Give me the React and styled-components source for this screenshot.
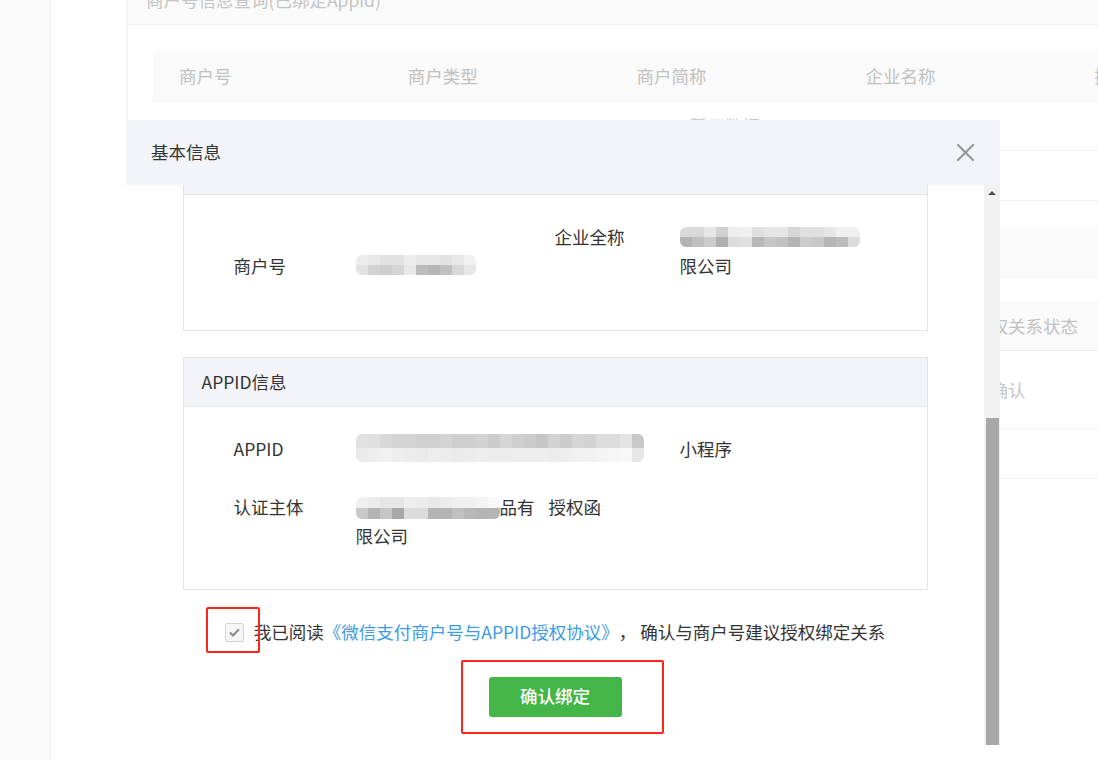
import React, { useLayoutEffect, useRef } from 'react';
import styled, { createGlobalStyle } from 'styled-components';

const GlobalStyle = createGlobalStyle`
  *, *::before, *::after { box-sizing: border-box; }
  html, body { margin: 0; padding: 0; }
  body {
    width: 1098px;
    height: 760px;
    overflow: hidden;
    background: #fff;
    font-family: "Noto Sans CJK SC", "Microsoft YaHei", "Liberation Sans", sans-serif;
    font-size: 17.5px;
    color: #333;
  }
`;

// ---------- background page ----------

const Page = styled.div`
  position: relative;
  display: flex;
  width: 1098px;
  height: 760px;
  overflow: hidden;
`;

const Sidebar = styled.aside`
  width: 51px;
  flex-shrink: 0;
  background: #fafafa;
  border-right: 1px solid #f0f0f0;
`;

const Main = styled.main`
  display: flex;
  flex-direction: column;
  gap: 26px;
  margin-top: -25px;
  padding-left: 76px;
`;

const Card = styled.section`
  width: 1195px;
  flex-shrink: 0;
  background: #fff;
  border-left: 1px solid #f0f0f0;
  border-bottom: 1px solid #f0f0f0;
`;

const CardHeader = styled.div`
  height: 50px;
  display: flex;
  align-items: center;
  padding-left: 18px;
  background: #fafafa;
  border-bottom: 1px solid #f0f0f0;
  color: #c4c4c4;
`;

const CardBody = styled.div`
  padding: ${p => p.$pad};
`;

const Table = styled.div`
  display: grid;
  grid-template-columns: ${p => p.$cols};
`;

const HeadCell = styled.div`
  height: 50px;
  display: flex;
  align-items: center;
  padding-left: 26px;
  background: #fafafa;
  border-bottom: 1px solid #f0f0f0;
  color: #c0c0c0;
  white-space: nowrap;
`;

const BodyCell = styled.div`
  height: ${p => p.$h}px;
  display: flex;
  align-items: center;
  padding-left: 26px;
  border-bottom: 1px solid #f0f0f0;
  color: #c4c4c4;
  white-space: nowrap;
`;

const EmptyRow = styled.div`
  grid-column: 1 / -1;
  height: 50px;
  display: flex;
  align-items: center;
  justify-content: center;
  border-bottom: 1px solid #f0f0f0;
  color: #c8c8c8;
`;

// ---------- modal ----------

const Modal = styled.div`
  position: absolute;
  left: 126px;
  top: 120px;
  width: 874px;
  height: 625px;
  display: flex;
  flex-direction: column;
  background: #fff;
`;

const ModalHeader = styled.header`
  height: 65px;
  flex-shrink: 0;
  display: flex;
  align-items: center;
  justify-content: space-between;
  padding: 0 25px;
  background: #f3f4f8;
`;

const ModalTitle = styled.h2`
  margin: -2px 0 0;
  font-size: 17.5px;
  font-weight: normal;
  color: #333;
`;

const CloseBtn = styled.button`
  width: 19px;
  height: 19px;
  padding: 0;
  border: 0;
  background: none;
  display: flex;
`;

const ModalBody = styled.div`
  flex: 1;
  min-height: 0;
  display: flex;
`;

const Viewport = styled.div`
  flex: 1;
  overflow: hidden;
`;

const Content = styled.div`
  display: flex;
  flex-direction: column;
  align-items: center;
  padding: 26px 0 28px;
`;

const ScrollBar = styled.div`
  width: 16px;
  flex-shrink: 0;
  display: flex;
  flex-direction: column;
  background: #f1f1f1;
`;

const ScrollArrow = styled.div`
  height: 16px;
  display: flex;
  align-items: center;
  justify-content: center;
  &::before {
    content: '';
    border-left: 4px solid transparent;
    border-right: 4px solid transparent;
    border-bottom: 4px solid #505050;
  }
`;

const ScrollTrack = styled.div`
  flex: 1;
`;

const ScrollThumb = styled.div`
  height: 327px;
  margin: 0 1px 0 2px;
  background: #a8a8a8;
`;

const Section = styled.section`
  width: 745px;
  margin-bottom: 26px;
  border: 1px solid #e4e4e4;
`;

const SectionHeader = styled.div`
  height: 49px;
  display: flex;
  align-items: center;
  padding: 0 0 2px 18px;
  background: #f3f4f8;
  border-bottom: 1px solid #e4e4e4;
  color: #333;
`;

const SectionBody = styled.div`
  display: grid;
  grid-template-columns: ${p => p.$cols};
  align-content: start;
  row-gap: 29px;
  height: ${p => p.$h}px;
  padding: 27px 0 0 50px;
  line-height: 29px;
`;

const Cell = styled.div`
  align-self: ${p => p.$align || 'start'};
  grid-column: ${p => p.$span || 'auto'};
  display: ${p => (p.$flex ? 'flex' : 'block')};
  align-items: center;
  min-height: 29px;
`;

const Note = styled.p`
  margin: 0;
  height: ${p => p.$h}px;
  padding: 20px 30px;
  line-height: 29px;
  color: #666;
`;

const MosaicGrid = styled.span`
  display: ${p => (p.$block ? 'grid' : 'inline-grid')};
  grid-template-columns: repeat(${p => p.$cols}, ${p => p.$cell}px);
  grid-auto-rows: ${p => p.$rowH}px;
  vertical-align: middle;
  margin: ${p => (p.$block ? '0' : '-8px 0 -6px')};
  filter: blur(0.5px);
  border-radius: 6px;
  overflow: hidden;
`;

const Tile = styled.span`
  background: ${p => p.$shade};
`;

const Agree = styled.div`
  display: flex;
  align-items: center;
  height: 29px;
  margin-top: 2px;
  padding-bottom: 2px;
  color: #333;
  white-space: nowrap;
`;

const CheckWrap = styled.span`
  position: relative;
  display: inline-flex;
  margin: 2px 10px 0 0;
`;

const CheckBox = styled.span`
  width: 19px;
  height: 19px;
  display: inline-flex;
  align-items: center;
  justify-content: center;
  border: 1px solid #d2d2d2;
  border-radius: 2px;
  background: #f6f6f6;
`;

const Annotation = styled.span`
  position: absolute;
  inset: ${p => p.$inset};
  border: 2.5px solid #ff2419;
  border-radius: 2px;
  pointer-events: none;
`;

const AgreementLink = styled.a`
  color: #3d9ae6;
  text-decoration: none;
`;

const ButtonWrap = styled.div`
  position: relative;
  margin-top: 30px;
`;

const ConfirmButton = styled.button`
  width: 133px;
  height: 40px;
  padding: 0 0 3px;
  border: 0;
  border-radius: 3px;
  background: #44b549;
  color: #fff;
  font-family: inherit;
  font-size: 17.5px;
  font-weight: 500;
`;

function Mosaic({ rows, cell = 12, rowH = 10, block }) {
  const grid = rows.map(r => r.split(' '));
  return (
    <MosaicGrid $cols={grid[0].length} $cell={cell} $rowH={rowH} $block={block}>
      {grid.flat().map((s, i) => (
        <Tile key={i} $shade={`#${s}${s}${s}`} />
      ))}
    </MosaicGrid>
  );
}

const mchIdRows = [
  'ec e8 e2 e2 ec e6 e6 e2 e8 f0',
  'e2 d2 ce d6 e8 bc b6 c0 d8 e6',
];
const companyRows = [
  'd9 d9 e6 d0 ee f0 e0 e6 e6 d6 e0 e0 e6 f0 f0',
  'b4 bf cc b0 dc e0 b8 c6 c2 b4 cc c8 b6 bd dc',
];
const appIdRows = [
  'e2 e0 d8 d4 d4 d0 d0 d4 cf cf d2 cc d6 cf cc c6 d2 cc d6 d2 dc dc e4 c8',
  'ea ee f0 ee ec ea ee ec ea ec ee ec ec ee ee ee ec ee f0 f2 f4 f6 f8 e6',
];
const subjectRows = [
  'f0 ec e6 e6 ee ec e8 ec f0 f0 f4 f8',
  'c8 b4 c6 a8 dc dc b4 b4 c0 b8 b4 b4',
];

function CloseIcon() {
  return (
    <svg width="19" height="19" viewBox="0 0 19 19">
      <path d="M2 2 L17 17 M17 2 L2 17" stroke="#9a9a9a" strokeWidth="2.4" strokeLinecap="round" />
    </svg>
  );
}

function CheckIcon() {
  return (
    <svg width="11" height="9" viewBox="0 0 11 9">
      <path d="M1 4.5 L4 7.5 L10 1.2" fill="none" stroke="#8a8a8a" strokeWidth="2" />
    </svg>
  );
}

export default function App() {
  const viewportRef = useRef(null);

  useLayoutEffect(() => {
    const el = viewportRef.current;
    if (el) el.scrollTop = el.scrollHeight;
  }, []);

  return (
    <Page>
      <GlobalStyle />
      <Sidebar />
      <Main>
        <Card>
          <CardHeader>商户号信息查询(已绑定Appid)</CardHeader>
          <CardBody $pad="26px 25px 49px">
            <Table $cols="repeat(5, 1fr)">
              <HeadCell>商户号</HeadCell>
              <HeadCell>商户类型</HeadCell>
              <HeadCell>商户简称</HeadCell>
              <HeadCell>企业名称</HeadCell>
              <HeadCell>操作</HeadCell>
              <EmptyRow>暂无数据</EmptyRow>
            </Table>
          </CardBody>
        </Card>
        <Card>
          <CardHeader />
          <CardBody $pad="24px 25px 49px">
            <Table $cols="200px 200px 200px 194px 1fr">
              <HeadCell />
              <HeadCell />
              <HeadCell />
              <HeadCell />
              <HeadCell>授权关系状态</HeadCell>
              <BodyCell $h={78} />
              <BodyCell $h={78} />
              <BodyCell $h={78} />
              <BodyCell $h={78} />
              <BodyCell $h={78}>待确认</BodyCell>
            </Table>
          </CardBody>
        </Card>
      </Main>

      <Modal>
        <ModalHeader>
          <ModalTitle>基本信息</ModalTitle>
          <CloseBtn aria-label="关闭">
            <CloseIcon />
          </CloseBtn>
        </ModalHeader>
        <ModalBody>
          <Viewport ref={viewportRef}>
            <Content>
              <Section>
                <SectionHeader>授权说明</SectionHeader>
                <Note $h={228}>
                  请核对以下商户号与APPID信息，确认无误后阅读并同意授权协议，
                  点击“确认绑定”即可建立商户号与APPID的授权绑定关系。
                </Note>
              </Section>

              <Section>
                <SectionHeader>商户信息</SectionHeader>
                <SectionBody $cols="122px 199px 125px 1fr" $h={135}>
                  <Cell $align="end">商户号</Cell>
                  <Cell $align="end" $flex>
                    <Mosaic rows={mchIdRows} />
                  </Cell>
                  <Cell>企业全称</Cell>
                  <Cell>
                    <Cell $flex>
                      <Mosaic rows={companyRows} block />
                    </Cell>
                    限公司
                  </Cell>
                </SectionBody>
              </Section>

              <Section>
                <SectionHeader>APPID信息</SectionHeader>
                <SectionBody $cols="122px 193px 131px 1fr" $h={182}>
                  <Cell>APPID</Cell>
                  <Cell $span="span 2" $flex>
                    <Mosaic rows={appIdRows} rowH={14} />
                  </Cell>
                  <Cell>小程序</Cell>
                  <Cell>认证主体</Cell>
                  <Cell>
                    <Mosaic rows={subjectRows} rowH={11} />
                    品有限公司
                  </Cell>
                  <Cell>授权函</Cell>
                  <Cell />
                </SectionBody>
              </Section>

              <Agree>
                <CheckWrap>
                  <CheckBox>
                    <CheckIcon />
                  </CheckBox>
                  <Annotation $inset="-16px -16px -11px -19px" />
                </CheckWrap>
                我已阅读
                <AgreementLink href="#">《微信支付商户号与APPID授权协议》</AgreementLink>
                ，&nbsp;确认与商户号建议授权绑定关系
              </Agree>

              <ButtonWrap>
                <ConfirmButton>确认绑定</ConfirmButton>
                <Annotation $inset="-17px -42px -17px -28px" />
              </ButtonWrap>
            </Content>
          </Viewport>
          <ScrollBar>
            <ScrollArrow />
            <ScrollTrack />
            <ScrollThumb />
          </ScrollBar>
        </ModalBody>
      </Modal>
    </Page>
  );
}
